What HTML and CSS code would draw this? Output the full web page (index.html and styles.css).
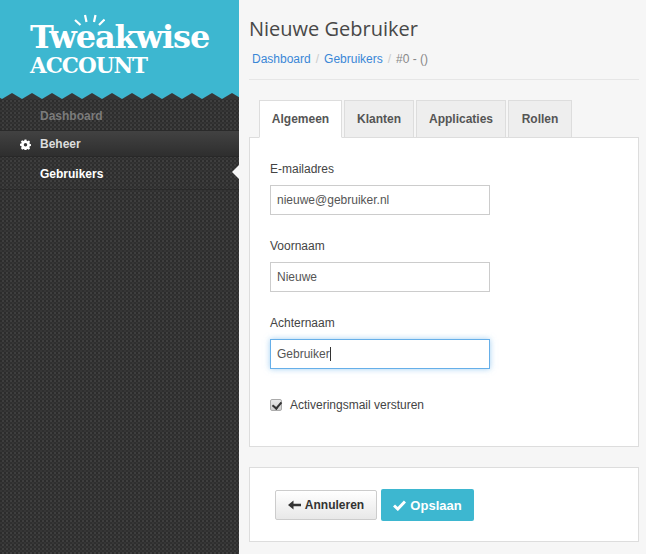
FILE: index.html
```html
<!DOCTYPE html>
<html lang="nl">
<head>
<meta charset="utf-8">
<title>Nieuwe Gebruiker</title>
<link rel="stylesheet" href="styles.css">
</head>
<body>
<div class="app">
  <aside class="sidebar">
    <div class="brand">
      <div class="logo">
        <svg class="rays" width="34" height="14" viewBox="0 0 34 14"><g stroke="#fff" stroke-width="2.2" fill="none"><path d="M4 6L9.500 11"/><path d="M14 1L15.500 8"/><path d="M24.500 1L23 8"/><path d="M33.500 5.500L28 11"/></g></svg>
        <div class="logo-main">Tweakwise</div>
        <div class="logo-sub">ACCOUNT</div>
      </div>
    </div>
    <svg class="zigzag" width="239" height="6" viewBox="0 0 239 6" preserveAspectRatio="none"><defs><pattern id="zz" width="20" height="6" patternUnits="userSpaceOnUse" x="2"><path d="M0 6L10 0L20 6Z" fill="#363636"/></pattern></defs><rect width="239" height="6" fill="url(#zz)"/></svg>
    <nav class="menu">
      <a class="item item-muted">Dashboard</a>
      <a class="item item-group">
        <svg class="gear" width="11" height="11" viewBox="0 0 12 12"><path fill="#fff" fill-rule="evenodd" d="M5 .5h2l.3 1.500 1 .4 1.300-.8 1.400 1.400-.8 1.300.4 1 1.400.3v2l-1.400.3-.4 1 .8 1.300-1.400 1.400-1.300-.8-1 .4-.3 1.400H5l-.3-1.400-1-.4-1.300.8L1 9.900l.8-1.300-.4-1L0 7.300v-2l1.400-.3.4-1L1 2.700 2.400 1.300l1.300.8 1-.4zM6 4.300a1.900 1.900 0 1 0 0 3.800 1.900 1.900 0 0 0 0-3.800z"/></svg>
        Beheer
      </a>
      <a class="item item-active">Gebruikers<span class="pointer"></span></a>
    </nav>
  </aside>
  <main class="content">
    <header class="page-head">
      <h1>Nieuwe Gebruiker</h1>
      <ol class="crumbs">
        <li><a>Dashboard</a></li>
        <li class="sep">/</li>
        <li><a>Gebruikers</a></li>
        <li class="sep">/</li>
        <li class="current">#0 - ()</li>
      </ol>
    </header>
    <ul class="tabs">
      <li class="tab tab-active">Algemeen</li>
      <li class="tab">Klanten</li>
      <li class="tab">Applicaties</li>
      <li class="tab">Rollen</li>
    </ul>
    <form class="panel panel-form">
      <div class="field">
        <label for="mail">E-mailadres</label>
        <input id="mail" type="text" value="nieuwe@gebruiker.nl">
      </div>
      <div class="field">
        <label for="first">Voornaam</label>
        <input id="first" type="text" value="Nieuwe">
      </div>
      <div class="field">
        <label for="last">Achternaam</label>
        <div class="input-wrap">
          <input id="last" class="is-focus" type="text" value="Gebruiker">
          <span class="caret"></span>
        </div>
      </div>
      <label class="check"><input type="checkbox" checked> Activeringsmail versturen</label>
    </form>
    <div class="panel panel-actions">
      <button class="btn btn-default" type="button">
        <svg width="13" height="10" viewBox="0 0 13 10"><path fill="#333" d="M0 5L5.500 .5V3.800H13V6.200H5.500V9.500Z"/></svg>
        Annuleren
      </button>
      <button class="btn btn-primary" type="button">
        <svg width="13" height="11" viewBox="0 0 13 11"><path fill="none" stroke="#fff" stroke-width="3" d="M1 5.500L4.800 9L12 1.500"/></svg>
        Opslaan
      </button>
    </div>
  </main>
</div>
</body>
</html>
```
FILE: styles.css
```css
* { box-sizing: border-box; }
html, body { margin: 0; height: 100%; overflow: hidden; }
body {
  font-family: "Liberation Sans", Arial, sans-serif;
  font-size: 12px;
  color: #555;
  background: #f6f6f6;
}
.app { display: flex; height: 554px; }

.sidebar {
  width: 239px;
  flex: none;
  display: flex;
  flex-direction: column;
  background-color: #363636;
  background-image:
    radial-gradient(circle at 1px 1px, #2c2c2c .9px, transparent 1.1px),
    radial-gradient(circle at 3px 3px, #2f2f2f .9px, transparent 1.1px),
    radial-gradient(circle at 3px 1px, #3f3f3f .7px, transparent .9px);
  background-size: 4px 4px;
}
.brand {
  height: 93px;
  background: #3db7d0;
  padding: 20px 0 0 30px;
}
.logo { position: relative; color: #fff; font-family: "DejaVu Serif", serif; font-weight: 700; }
.rays { position: absolute; left: 41px; top: -6px; }
.logo-main { font-size: 32px; line-height: 34px; letter-spacing: -1.100px; white-space: nowrap; }
.logo-sub { font-size: 21.500px; line-height: 24px; letter-spacing: -1px; white-space: nowrap; }
.zigzag { display: block; background: #3db7d0; flex: none; }

.menu { display: flex; flex-direction: column; }
.item {
  position: relative;
  display: flex;
  align-items: center;
  padding-left: 40px;
  font-weight: 700;
  color: #fff;
  text-decoration: none;
}
.item-muted { height: 32px; color: #7b7b7b; border-bottom: 1px solid #2a2a2a; padding-top: 2px; }
.item-group {
  height: 26px;
  color: #ddd;
  background: linear-gradient(#424242, #2e2e2e);
  border-bottom: 1px solid #282828;
}
.gear { position: absolute; left: 20px; top: 8px; }
.item-active { height: 33px; border-bottom: 1px solid #2a2a2a; padding-top: 1px; }
.pointer {
  position: absolute;
  right: 0;
  top: 8px;
  border: 7.500px solid transparent;
  border-left: 0;
  border-right: 7px solid #f6f6f6;
}

.content { flex: 1; padding: 0 7px 0 10px; min-width: 0; }
.page-head { height: 80px; padding: 17px 0 0 0; border-bottom: 1px solid #e6e6e6; }
h1 {
  margin: 0;
  font-family: "Open Sans", sans-serif;
  font-size: 20px;
  font-weight: 400;
  line-height: 24px;
  color: #484848;
}
.crumbs { display: flex; gap: 5px; list-style: none; margin: 0; padding: 11px 0 0 3px; line-height: 14px; }
.crumbs a { color: #3a87d6; }
.sep { color: #ccc; }
.current { color: #888; }

.tabs {
  display: grid;
  grid-template-columns: 83px 70px 90px 64px;
  gap: 2px;
  list-style: none;
  margin: 20px 0 -1px 10px;
  padding: 0;
  position: relative;
  z-index: 1;
}
.tab {
  height: 38px;
  display: flex;
  align-items: center;
  justify-content: center;
  font-weight: 700;
  color: #555;
  background: #eee;
  border: 1px solid #ddd;
}
.tab-active { background: #fff; border-bottom-color: #fff; }

.panel { background: #fff; border: 1px solid #ddd; }
.panel-form { height: 310px; padding: 23px 20px 0; }
.field { margin-bottom: 23px; }
.field label { display: block; height: 16px; line-height: 16px; margin-bottom: 8px; color: #444; }
.field input {
  display: block;
  width: 220px;
  height: 30px;
  padding: 0 6px;
  border: 1px solid #ccc;
  border-radius: 0;
  outline: 0;
  background: #fff;
  color: #555;
  font: 12px "Liberation Sans", Arial, sans-serif;
}
.field input.is-focus { border-color: #66afe9; box-shadow: 0 0 6px rgba(102,175,233,.6); }
.input-wrap { position: relative; }
.caret { position: absolute; left: 60px; top: 8px; width: 1px; height: 14px; background: #333; }
.check { display: flex; align-items: center; gap: 8px; margin-top: 29px; height: 14px; color: #444; }
.check input {
  appearance: none;
  position: relative;
  margin: 0;
  width: 12px;
  height: 12px;
  border: 1px solid #aaa;
  border-radius: 2px;
  background: linear-gradient(#e8e8e8, #cfcfcf);
}
.check input::before {
  content: "";
  position: absolute;
  left: 3px;
  top: 0;
  width: 4px;
  height: 7px;
  border: solid #333;
  border-width: 0 2px 2px 0;
  transform: rotate(40deg);
}

.panel-actions { margin-top: 20px; height: 75px; padding: 21px 0 0 25px; display: flex; align-items: flex-start; gap: 4px; }
.btn {
  display: inline-flex;
  align-items: center;
  justify-content: center;
  gap: 4px;
  font: 700 12px "Liberation Sans", Arial, sans-serif;
  border-radius: 2px;
}
.btn-default {
  width: 102px;
  height: 30px;
  margin-top: 1px;
  color: #333;
  border: 1px solid #ccc;
  background: linear-gradient(#fff, #e8e8e8);
}
.btn-primary {
  width: 93px;
  height: 32px;
  color: #fff;
  font-size: 13px;
  border: 0;
  background: #3db7d0;
}
```
